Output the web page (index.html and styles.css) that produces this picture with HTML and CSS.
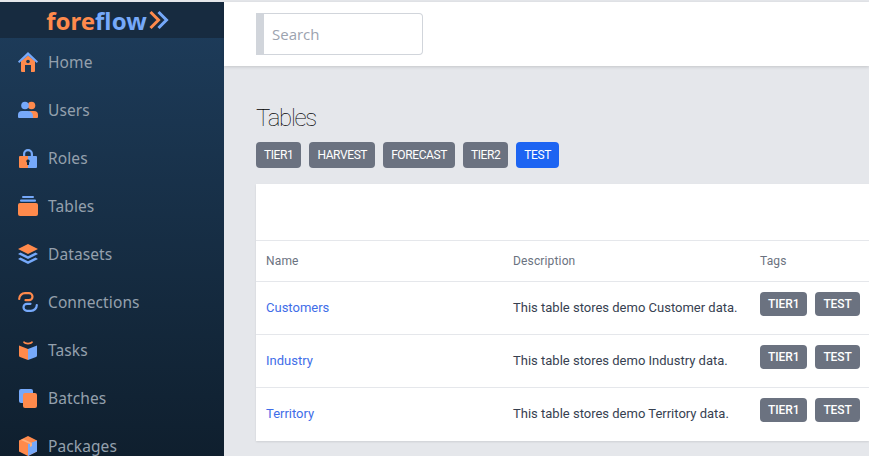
FILE: index.html
```html
<!DOCTYPE html>
<html lang="en">
<head>
    <meta charset="UTF-8">
    <meta name="viewport" content="width=device-width, initial-scale=1.0">
    <title>Tables</title>
    <link rel="stylesheet" href="styles.css">
</head>
<body>
    <div class="app">
        <aside class="sidebar">
            <div class="logo">
                <span class="logo-fore">fore</span><span class="logo-flow">flow</span>
                <svg class="logo-arrows" width="20" height="20" viewBox="0 0 20 20" fill="none" stroke-width="3">
                    <path d="M1.500 2l8 8-8 8" stroke="#ff8a4c"/>
                    <path d="M9.500 2l8 8-8 8" stroke="#76a9fa"/>
                </svg>
            </div>
            <nav class="nav">
                <a class="nav-item" href="#">
                    <svg class="nav-icon" viewBox="0 0 20 20">
                        <path d="M10 3.500l7 5.500v10a1 1 0 0 1-1 1h-3v-7H7v7H4a1 1 0 0 1-1-1V9z" fill="#ff8a4c"/>
                        <circle cx="10" cy="9.500" r="1.800" fill="#1c3a57"/>
                        <path d="M10 0l10 9.500-1.200 1.500L10 3.500 1.200 11 0 9.500z" fill="#76a9fa"/>
                    </svg>
                    Home
                </a>
                <a class="nav-item" href="#">
                    <svg class="nav-icon" viewBox="0 0 20 20">
                        <circle cx="13.500" cy="5.500" r="3.800" fill="#ff8a4c"/>
                        <path d="M11 11h5a4 4 0 0 1 4 4v2a1 1 0 0 1-1 1h-6z" fill="#ff8a4c"/>
                        <circle cx="7" cy="5.500" r="3.800" fill="#76a9fa"/>
                        <path d="M4 11h6a5 5 0 0 1 5 5v2H1a1 1 0 0 1-1-1v-2a4 4 0 0 1 4-4z" fill="#76a9fa"/>
                    </svg>
                    Users
                </a>
                <a class="nav-item" href="#">
                    <svg class="nav-icon" viewBox="0 0 20 20">
                        <path d="M5 9V6a5 5 0 0 1 10 0v3h-2.200V6a2.800 2.800 0 0 0-5.600 0v3z" fill="#76a9fa"/>
                        <path d="M2 8h8v12H2a1 1 0 0 1-1-1V9a1 1 0 0 1 1-1z" fill="#ff8a4c"/>
                        <path d="M10 8h8a1 1 0 0 1 1 1v10a1 1 0 0 1-1 1h-8z" fill="#76a9fa"/>
                        <path d="M10 11.500a1.700 1.700 0 0 1 1 3.100V17H9v-2.400a1.700 1.700 0 0 1 1-3.100z" fill="#12283d"/>
                    </svg>
                    Roles
                </a>
                <a class="nav-item" href="#">
                    <svg class="nav-icon" viewBox="0 0 20 20">
                        <rect x="4" y="0" width="12" height="2" rx="1" fill="#76a9fa"/>
                        <rect x="2" y="3.500" width="16" height="2.200" rx="1" fill="#76a9fa"/>
                        <rect x="0" y="7" width="20" height="13" rx="2" fill="#ff8a4c"/>
                    </svg>
                    Tables
                </a>
                <a class="nav-item" href="#">
                    <svg class="nav-icon" viewBox="0 0 20 20">
                        <path d="M10 0l10 5-10 5L0 5z" fill="#ff8a4c"/>
                        <path d="M2.500 8.500L10 12.200l7.500-3.700L20 10l-10 5-10-5z" fill="#76a9fa"/>
                        <path d="M2.500 13.500L10 17.200l7.500-3.700L20 15l-10 5-10-5z" fill="#76a9fa"/>
                    </svg>
                    Datasets
                </a>
                <a class="nav-item" href="#">
                    <svg class="nav-icon" viewBox="0 0 20 20" fill="none" stroke-width="2.200" stroke-linecap="round">
                        <path d="M1.200 7A5.800 5.800 0 0 1 7 1.200h4a3.500 3.500 0 0 1 0 7H7.500" stroke="#ff8a4c"/>
                        <path d="M1.200 7A5.800 5.800 0 0 1 7 1.200h4a3.500 3.500 0 0 1 0 7H7.500" stroke="#76a9fa" transform="rotate(180 10 10)"/>
                    </svg>
                    Connections
                </a>
                <a class="nav-item" href="#">
                    <svg class="nav-icon" viewBox="0 0 20 20">
                        <path d="M6 1c1.500 2.200 6.500 2.200 8 0l1 1.200c-2 3-8 3-10 0z" fill="#ff8a4c"/>
                        <path d="M1 5.500l9 3.500v11l-8-3a1.500 1.500 0 0 1-1-1.400z" fill="#ff8a4c"/>
                        <path d="M19 5.500L10 9v11l8-3a1.500 1.500 0 0 0 1-1.400z" fill="#76a9fa"/>
                    </svg>
                    Tasks
                </a>
                <a class="nav-item" href="#">
                    <svg class="nav-icon" viewBox="0 0 20 20">
                        <rect x="1" y="1" width="14" height="14" rx="2" fill="#76a9fa"/>
                        <rect x="5" y="5" width="14" height="15" rx="2" fill="#ff8a4c"/>
                    </svg>
                    Batches
                </a>
                <a class="nav-item" href="#">
                    <svg class="nav-icon" viewBox="0 0 20 20">
                        <path d="M10 0l9 4.500v11L10 20l-9-4.500v-11z" fill="#ff8a4c"/>
                        <path d="M10 8l9-3.500v11L10 20z" fill="#76a9fa"/>
                        <path d="M5 3l9 4v3l-2 1V8L3 4z" fill="#ffb07c"/>
                    </svg>
                    Packages
                </a>
            </nav>
        </aside>
        <div class="content">
            <header class="topbar">
                <input class="search" type="text" placeholder="Search">
            </header>
            <main class="main">
                <h1 class="page-title">Tables</h1>
                <div class="tag-row">
                    <span class="tag">TIER1</span>
                    <span class="tag">HARVEST</span>
                    <span class="tag">FORECAST</span>
                    <span class="tag">TIER2</span>
                    <span class="tag tag-active">TEST</span>
                </div>
                <div class="card">
                    <div class="card-head"></div>
                    <table class="data-table">
                        <thead>
                            <tr><th>Name</th><th>Description</th><th>Tags</th></tr>
                        </thead>
                        <tbody>
                            <tr>
                                <td><a href="#">Customers</a></td>
                                <td>This table stores demo Customer data.</td>
                                <td class="cell-tags"><span class="tag">TIER1</span><span class="tag">TEST</span></td>
                            </tr>
                            <tr>
                                <td><a href="#">Industry</a></td>
                                <td>This table stores demo Industry data.</td>
                                <td class="cell-tags"><span class="tag">TIER1</span><span class="tag">TEST</span></td>
                            </tr>
                            <tr>
                                <td><a href="#">Territory</a></td>
                                <td>This table stores demo Territory data.</td>
                                <td class="cell-tags"><span class="tag">TIER1</span><span class="tag">TEST</span></td>
                            </tr>
                        </tbody>
                    </table>
                </div>
            </main>
        </div>
    </div>
</body>
</html>
```

FILE: styles.css
```css
* {
    box-sizing: border-box;
}

html, body {
    height: 100%;
}

body {
    margin: 0;
    overflow: hidden;
    font-family: Roboto, sans-serif;
    background-color: #e5e7eb;
}

.app {
    display: flex;
    height: 100%;
    border-top: 2px solid #e5e7eb;
}

.sidebar {
    flex: 0 0 224px;
    background: linear-gradient(to bottom, #1e3d5c, #0f1f2e);
    overflow: hidden;
}

.logo {
    height: 36px;
    background-color: #172b40;
    display: flex;
    align-items: center;
    justify-content: center;
    padding-right: 9px;
    font-family: "Noto Sans", sans-serif;
    font-weight: 700;
    font-size: 24px;
}

.logo-fore {
    color: #ff8a4c;
}

.logo-flow {
    color: #76a9fa;
}

.logo-arrows {
    margin-left: 2px;
}

.nav-item {
    display: flex;
    align-items: center;
    gap: 10px;
    height: 48px;
    padding-left: 18px;
    font-family: "Noto Sans", sans-serif;
    font-size: 15.500px;
    letter-spacing: 0.100px;
    color: #94a0ad;
    text-decoration: none;
}

.nav-icon {
    width: 20px;
    height: 20px;
    flex: none;
}

.content {
    flex: 1;
    min-width: 0;
    display: flex;
    flex-direction: column;
}

.topbar {
    height: 64px;
    padding: 11px 32px;
    background-color: #fff;
    box-shadow: 0 1px 3px rgba(0, 0, 0, 0.15);
}

.search {
    display: block;
    width: 167px;
    height: 42px;
    padding: 0 8px;
    border: 1px solid #d1d5db;
    border-left-width: 8px;
    border-radius: 0 4px 4px 0;
    font-family: "Open Sans", sans-serif;
    font-size: 15px;
    outline: none;
}

.search::placeholder {
    color: #9ca3af;
}

.main {
    padding: 38px 0 0 32px;
}

.page-title {
    margin: 0 0 9px;
    font-size: 24px;
    font-weight: 100;
    line-height: 29px;
    letter-spacing: -1.300px;
    color: #000;
}

.tag-row {
    display: flex;
    gap: 8px;
    margin-bottom: 16px;
}

.tag {
    display: inline-block;
    height: 26px;
    padding: 0 8px;
    border-radius: 4px;
    background-color: #6b7280;
    color: #fff;
    font-size: 12px;
    line-height: 26px;
    letter-spacing: -0.400px;
}

.tag-active {
    background-color: #1c64f2;
}

.card {
    background-color: #fff;
    box-shadow: 0 1px 2px rgba(0, 0, 0, 0.1);
}

.card-head {
    height: 56px;
}

.data-table {
    width: 100%;
    table-layout: fixed;
    border-collapse: collapse;
    font-size: 13px;
}

.data-table th, .data-table td {
    padding: 0 10px;
    border-top: 1px solid #e5e7eb;
    text-align: left;
}

.data-table th:nth-child(-n+2) {
    width: 247px;
}

.data-table th {
    height: 41px;
    font-size: 12px;
    font-weight: 400;
    letter-spacing: 0.150px;
    color: #6b7280;
}

.data-table td {
    height: 53px;
    padding-bottom: 2px;
    color: #374151;
}

.data-table a {
    color: #3f6ee8;
    text-decoration: none;
}

.data-table .cell-tags {
    padding-top: 10px;
    vertical-align: top;
    white-space: nowrap;
}

.cell-tags .tag {
    height: 24px;
    line-height: 24px;
    padding: 0 8px;
    margin-right: 8px;
    font-weight: 500;
    letter-spacing: -0.100px;
}
```
